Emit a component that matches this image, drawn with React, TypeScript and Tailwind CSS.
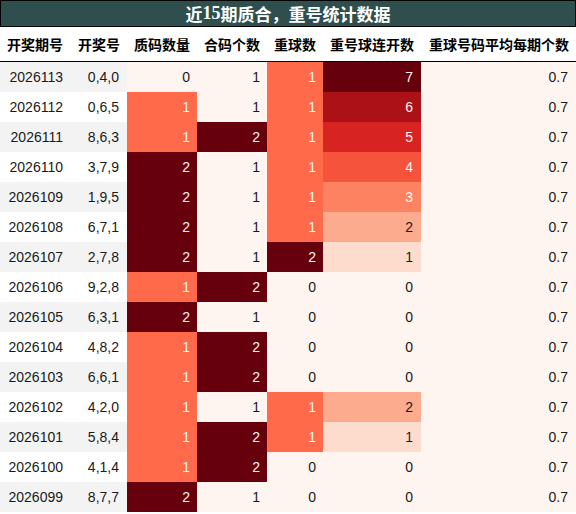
import React from 'react';

type Row = [string, string, number, number, number, number];

const rows: Row[] = [
  ['2026113', '0,4,0', 0, 1, 1, 7],
  ['2026112', '0,6,5', 1, 1, 1, 6],
  ['2026111', '8,6,3', 1, 2, 1, 5],
  ['2026110', '3,7,9', 2, 1, 1, 4],
  ['2026109', '1,9,5', 2, 1, 1, 3],
  ['2026108', '6,7,1', 2, 1, 1, 2],
  ['2026107', '2,7,8', 2, 1, 2, 1],
  ['2026106', '9,2,8', 1, 2, 0, 0],
  ['2026105', '6,3,1', 2, 1, 0, 0],
  ['2026104', '4,8,2', 1, 2, 0, 0],
  ['2026103', '6,6,1', 1, 2, 0, 0],
  ['2026102', '4,2,0', 1, 1, 1, 2],
  ['2026101', '5,8,4', 1, 2, 1, 1],
  ['2026100', '4,1,4', 1, 2, 0, 0],
  ['2026099', '8,7,7', 2, 1, 0, 0],
];

// Reds colour scale, 0..2
const scale3: Record<number, string> = {
  0: 'bg-[#fff5f0] text-[#1a1a1a]',
  1: 'bg-[#fe6a4a] text-[#fff4f0]',
  2: 'bg-[#67000d] text-[#fff4f0]',
};

// 合码个数 only spans 1..2
const scale2: Record<number, string> = {
  1: 'bg-[#fff5f0] text-[#1a1a1a]',
  2: 'bg-[#67000d] text-[#fff4f0]',
};

// Reds colour scale, 0..7
const scale7: Record<number, string> = {
  0: 'bg-[#fff5f0] text-[#1a1a1a]',
  1: 'bg-[#fedccd] text-[#1a1a1a]',
  2: 'bg-[#fcab8f] text-[#1a1a1a]',
  3: 'bg-[#fc8262] text-[#fff4f0]',
  4: 'bg-[#f5533b] text-[#fff4f0]',
  5: 'bg-[#d72322] text-[#fff4f0]',
  6: 'bg-[#ac1117] text-[#fff4f0]',
  7: 'bg-[#67000d] text-[#fff4f0]',
};

const headers = ['开奖期号', '开奖号', '质码数量', '合码个数', '重球数', '重号球连开数', '重球号码平均每期个数'];

const cols = 'grid grid-cols-[74px_53px_70px_70px_56px_98px_155px]';

export default function App() {
  return (
    <div className="w-[576px] h-[514px] bg-white font-['Liberation_Sans','Noto_Sans_CJK_SC',sans-serif] text-[14px]">
      <div className="h-[27px] bg-[#2f4f4f] border border-black flex items-center justify-center text-white font-bold text-[17px] font-['Noto_Sans_CJK_SC',sans-serif]">
        <span>近</span>
        <span className="font-['Liberation_Serif',serif] text-[18px]">15</span>
        <span>期质合，重号统计数据</span>
      </div>
      <div className={`${cols} h-[35px] border-b border-black font-bold text-black font-['Noto_Sans_CJK_SC',sans-serif]`}>
        {headers.map((h, i) => (
          <div key={h} className={`flex items-center justify-end ${i === 0 ? 'pr-[11px]' : 'pr-[7px]'}`}>
            {h}
          </div>
        ))}
      </div>
      {rows.map((r, i) => {
        const stripe = i % 2 === 0 ? 'bg-[#f3f3f3]' : 'bg-white';
        return (
          <div key={r[0]} className={`${cols} h-[30px]`}>
            <div className={`${stripe} text-[#1a1a1a] flex items-center justify-end pr-[11px]`}>{r[0]}</div>
            <div className={`${stripe} text-[#1a1a1a] flex items-center justify-end pr-[8px]`}>{r[1]}</div>
            <div className={`${scale3[r[2]]} flex items-center justify-end pr-[7px]`}>{r[2]}</div>
            <div className={`${scale2[r[3]]} flex items-center justify-end pr-[7px]`}>{r[3]}</div>
            <div className={`${scale3[r[4]]} flex items-center justify-end pr-[7px]`}>{r[4]}</div>
            <div className={`${scale7[r[5]]} flex items-center justify-end pr-[8px]`}>{r[5]}</div>
            <div className="bg-[#fff5f0] text-[#1a1a1a] flex items-center justify-end pr-[8px]">0.7</div>
          </div>
        );
      })}
    </div>
  );
}
